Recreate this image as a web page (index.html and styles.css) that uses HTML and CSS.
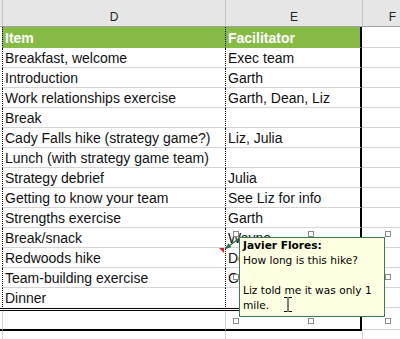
FILE: index.html
```html
<!DOCTYPE html>
<html>
<head>
<meta charset="utf-8">
<link rel="stylesheet" href="styles.css">
</head>
<body>
<div class="sheet">
  <div class="hdr">
    <div class="h-stub"></div>
    <div class="h-cell h-d">D</div>
    <div class="h-cell h-e">E</div>
    <div class="h-cell h-f">F</div>
  </div>

  <div class="row title">
    <div class="stub"></div>
    <div class="cell d">Item</div>
    <div class="cell e">Facilitator</div>
    <div class="cell f"></div>
  </div>
  <div class="row"><div class="stub"></div><div class="cell d">Breakfast, welcome</div><div class="cell e">Exec team</div><div class="cell f"></div></div>
  <div class="row"><div class="stub"></div><div class="cell d">Introduction</div><div class="cell e">Garth</div><div class="cell f"></div></div>
  <div class="row"><div class="stub"></div><div class="cell d">Work relationships exercise</div><div class="cell e">Garth, Dean, Liz</div><div class="cell f"></div></div>
  <div class="row"><div class="stub"></div><div class="cell d">Break</div><div class="cell e"></div><div class="cell f"></div></div>
  <div class="row"><div class="stub"></div><div class="cell d">Cady Falls hike (strategy game?)</div><div class="cell e">Liz, Julia</div><div class="cell f"></div></div>
  <div class="row"><div class="stub"></div><div class="cell d">Lunch (with strategy game team)</div><div class="cell e"></div><div class="cell f"></div></div>
  <div class="row"><div class="stub"></div><div class="cell d">Strategy debrief</div><div class="cell e">Julia</div><div class="cell f"></div></div>
  <div class="row"><div class="stub"></div><div class="cell d">Getting to know your team</div><div class="cell e">See Liz for info</div><div class="cell f"></div></div>
  <div class="row"><div class="stub"></div><div class="cell d">Strengths exercise</div><div class="cell e">Garth</div><div class="cell f"></div></div>
  <div class="row"><div class="stub"></div><div class="cell d">Break/snack</div><div class="cell e">Wayne</div><div class="cell f"></div></div>
  <div class="row"><div class="stub"></div><div class="cell d">Redwoods hike</div><div class="cell e">Dean</div><div class="cell f"></div></div>
  <div class="row"><div class="stub"></div><div class="cell d">Team-building exercise</div><div class="cell e">Garth</div><div class="cell f"></div></div>
  <div class="row last"><div class="stub"></div><div class="cell d">Dinner</div><div class="cell e"></div><div class="cell f"></div></div>
  <div class="row empty"><div class="stub"></div><div class="cell d"></div><div class="cell e"></div><div class="cell f"></div></div>
  <div class="row tail"><div class="stub"></div><div class="cell d"></div><div class="cell e"></div><div class="cell f"></div></div>

  <div class="indicator"></div>

  <svg class="arrow" width="24" height="22" viewBox="0 0 24 22">
    <line x1="21.5" y1="6" x2="8" y2="16.3" stroke="#2f6f46" stroke-width="1.2"/>
    <polygon points="6.5,17.5 13.5,15.1 10.4,11.2" fill="#2f6f46"/>
  </svg>

  <div class="comment">
    <div class="author">Javier Flores:</div>
    <div>How long is this hike?</div>
    <div class="blank">&nbsp;</div>
    <div>Liz told me it was only 1 mile.</div>
  </div>

  <div class="handle h1"></div>
  <div class="handle h2"></div>
  <div class="handle h3"></div>
  <div class="handle h4"></div>
  <div class="handle h5"></div>
  <div class="handle h6"></div>
  <div class="handle h7"></div>
  <div class="handle h8"></div>

  <svg class="ibeam" width="10" height="17" viewBox="0 0 10 17">
    <path d="M1 1.5H4M6 1.5H9M5 1V16M1 15.5H4M6 15.5H9" stroke="#000" stroke-width="1" fill="none"/>
  </svg>
</div>
</body>
</html>
```

FILE: styles.css
```css
html, body {
  margin: 0;
  padding: 0;
  background: #fff;
}

.sheet {
  position: relative;
  width: 400px;
  height: 339px;
  overflow: hidden;
  font-family: "Liberation Sans", Arial, sans-serif;
}

/* column header band */
.hdr {
  display: flex;
  height: 27px;
  background: #e6e6e6;
  border-bottom: 1px solid #a3a3a3;
  box-sizing: border-box;
  font-size: 12px;
  color: #222;
}
.h-stub { width: 2px; flex: none; }
.h-cell {
  flex: none;
  box-sizing: border-box;
  border-left: 1px solid #c4c4c4;
  text-align: center;
  padding-top: 8px;
  line-height: 18px;
}
.h-d { width: 223px; }
.h-e { width: 137px; }
.h-f { width: 60px; }

/* body rows */
.row {
  display: flex;
  height: 20px;
}
.stub { width: 2px; flex: none; }
.cell {
  flex: none;
  box-sizing: border-box;
  height: 20px;
  padding: 1px 0 0 2px;
  line-height: 19px;
  font-size: 14px;
  color: #111;
  white-space: nowrap;
  border-bottom: 1px solid #d4d4d4;
}
.d {
  width: 223px;
  border-left: 1px dotted #000;
}
.e {
  width: 137px;
  border-left: 1px dotted #000;
  border-right: 2px solid #000;
}
.f { width: 60px; }

/* title row */
.title { height: 21px; }
.title .cell { height: 21px; padding-top: 2px; }
.title .d,
.title .e {
  background: #86bb45;
  border-bottom-color: #86bb45;
  color: #fff;
  font-weight: bold;
}

/* last data row with double bottom border */
.last { height: 23px; }
.last .stub {
  box-sizing: border-box;
  height: 23px;
  border-bottom: 3px double #000;
}
.last .d,
.last .e {
  height: 23px;
  border-bottom: 3px double #000;
}
.last .f { height: 20px; }

/* empty row closed by thick border */
.empty { height: 20px; }
.empty .stub {
  box-sizing: border-box;
  height: 20px;
  border-bottom: 2px solid #000;
}
.empty .d,
.empty .e {
  border-bottom: 2px solid #000;
}
.empty .d { border-left: 1px solid #d4d4d4; }
.empty .e { border-left: 1px solid #d4d4d4; }
.empty .f { height: 19px; }

.tail { height: 20px; }
.tail .cell { border-bottom: none; }
.tail .d { border-left: 1px solid #d4d4d4; }
.tail .e { border-left: 1px solid #d4d4d4; border-right: none; width: 137px; }
.tail .f { border-left: 1px solid #d4d4d4; }

/* comment indicator */
.indicator {
  position: absolute;
  left: 219px;
  top: 248px;
  width: 0;
  height: 0;
  border-top: 5px solid #e0201c;
  border-left: 5px solid transparent;
}

.arrow {
  position: absolute;
  left: 218px;
  top: 232px;
}

.comment {
  position: absolute;
  left: 239px;
  top: 237px;
  width: 146px;
  height: 80px;
  box-sizing: border-box;
  border: 1px solid #3b7a52;
  background: #ffffe1;
  padding: 0 3px;
  font-family: "DejaVu Sans", Verdana, sans-serif;
  font-size: 10.6px;
  line-height: 15px;
  color: #000;
}
.author { font-weight: bold; }

.handle {
  position: absolute;
  width: 6px;
  height: 6px;
  box-sizing: border-box;
  border: 1px solid #8a8a8a;
  background: #fff;
}
.h1 { left: 233px; top: 231px; }
.h2 { left: 308px; top: 231px; }
.h3 { left: 385px; top: 231px; }
.h4 { left: 233px; top: 274px; }
.h5 { left: 385px; top: 274px; }
.h6 { left: 233px; top: 318px; }
.h7 { left: 308px; top: 318px; }
.h8 { left: 385px; top: 318px; }

.ibeam {
  position: absolute;
  left: 283px;
  top: 296px;
}
```
